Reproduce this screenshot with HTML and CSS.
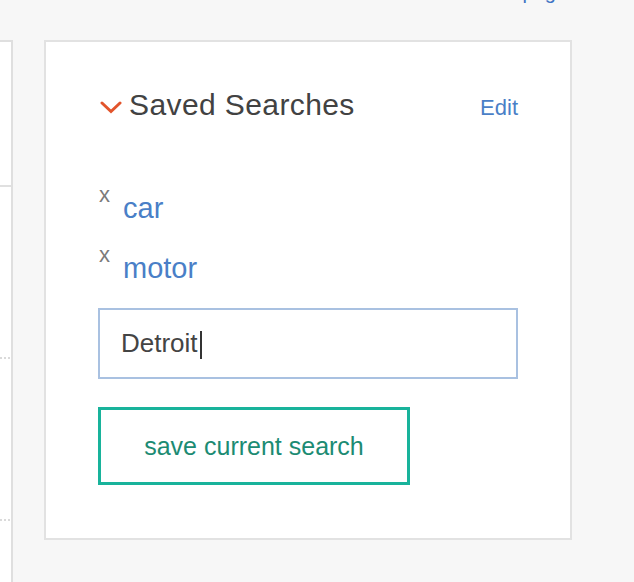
FILE: index.html
```html
<!DOCTYPE html>
<html lang="en">
<head>
<meta charset="utf-8">
<title>Saved Searches</title>
<link rel="stylesheet" href="styles.css">
</head>
<body>
<div class="topbar">
  <div class="pager">next page</div>
</div>
<div class="layout">
  <aside class="side">
    <div class="side-row side-row--first"></div>
    <div class="side-row side-row--dotted"></div>
    <div class="side-row side-row--dotted side-row--short"></div>
    <div class="side-row side-row--last"></div>
  </aside>
  <section class="panel">
    <div class="panel-head">
      <svg class="chev" width="22" height="13" viewBox="0 0 22 13" aria-hidden="true">
        <polyline points="2,2 11,10.5 20,2" fill="none" stroke="#e2542c" stroke-width="3" stroke-linecap="round" stroke-linejoin="miter"/>
      </svg>
      <h2 class="title">Saved Searches</h2>
      <a class="edit" href="#">Edit</a>
    </div>
    <ul class="searches">
      <li class="search"><span class="remove">x</span><a class="term" href="#">car</a></li>
      <li class="search"><span class="remove">x</span><a class="term" href="#">motor</a></li>
    </ul>
    <div class="field"><span class="field-text">Detroit</span><span class="caret"></span></div>
    <button class="save" type="button">save current search</button>
  </section>
</div>
</body>
</html>
```

FILE: styles.css
```css
html, body {
  margin: 0;
  padding: 0;
  background: #f7f7f7;
  font-family: "Liberation Sans", Arial, sans-serif;
}

.topbar {
  height: 40px;
  display: flow-root;
}

.pager {
  width: 567px;
  margin-top: -18px;
  text-align: right;
  font-size: 20px;
  line-height: 20px;
  color: #3f74c4;
}

.layout {
  display: flex;
  align-items: flex-start;
}

.side {
  width: 11px;
  min-height: 560px;
  background: #ffffff;
  border-top: 2px solid #dfdfdf;
  border-right: 2px solid #dfdfdf;
}

.side-row--first {
  height: 143px;
  border-bottom: 2px solid #e0e0e0;
}

.side-row--dotted {
  height: 170px;
  margin-right: 1px;
  border-bottom: 2px dotted #dadada;
}

.side-row--short {
  height: 160px;
}

.panel {
  margin-left: 31px;
  width: 420px;
  padding: 45px 52px 53px 52px;
  background: #ffffff;
  border: 2px solid #e2e2e2;
}

.panel-head {
  display: flex;
  align-items: baseline;
}

.chev {
  display: block;
  margin-left: 2px;
  margin-right: 7px;
  position: relative;
  top: -1px;
}

.title {
  margin: 0;
  flex: 1;
  font-size: 30px;
  line-height: 36px;
  font-weight: normal;
  letter-spacing: 0.4px;
  color: #424242;
}

.edit {
  font-size: 22px;
  color: #4a7fc7;
  text-decoration: none;
}

.searches {
  list-style: none;
  margin: 55px 0 0 0;
  padding: 0;
}

.search {
  font-size: 29px;
  line-height: 60px;
}

.remove {
  display: inline-block;
  width: 24px;
  margin-left: 1px;
  font-size: 22px;
  line-height: 1;
  color: #7a7a7a;
  vertical-align: 16px;
}

.term {
  color: #4a7fc7;
  text-decoration: none;
}

.field {
  margin-top: 10px;
  height: 67px;
  border: 2px solid #a9c1e1;
  padding-left: 21px;
  font-size: 26px;
  line-height: 67px;
  color: #444444;
}

.caret {
  display: inline-block;
  width: 2px;
  height: 28px;
  margin-left: 2px;
  background: #333333;
  vertical-align: -7px;
}

.save {
  display: block;
  margin-top: 28px;
  width: 312px;
  height: 78px;
  padding: 0;
  background: #ffffff;
  border: 3px solid #18b39b;
  border-radius: 0;
  font-family: "Liberation Sans", Arial, sans-serif;
  font-size: 25px;
  line-height: 72px;
  color: #1c8b73;
  text-align: center;
}
```
